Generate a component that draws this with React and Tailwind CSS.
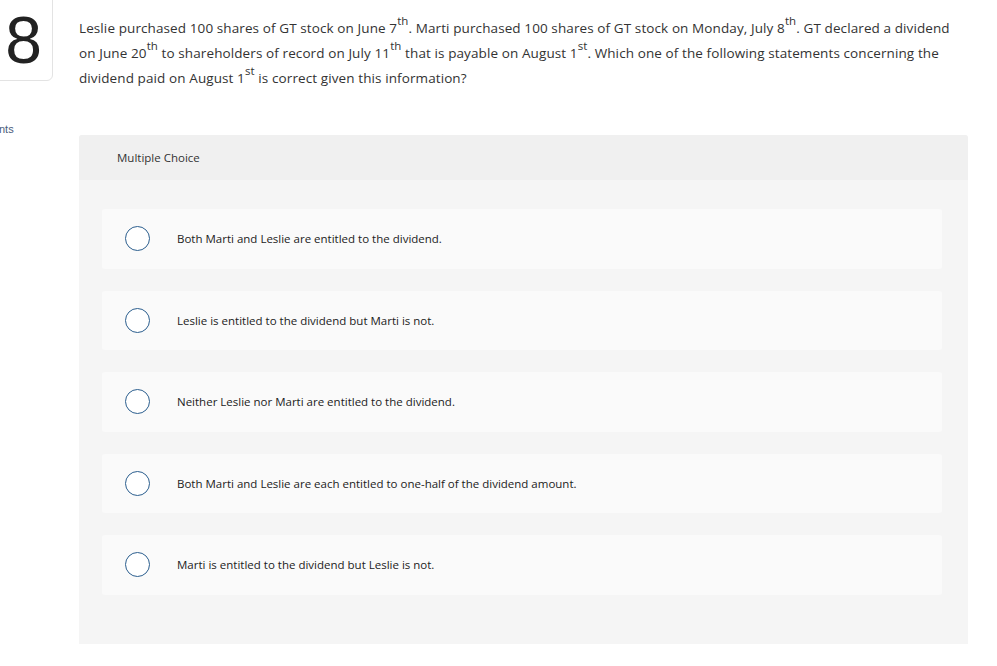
export default function App() {
  const options = [
    "Both Marti and Leslie are entitled to the dividend.",
    "Leslie is entitled to the dividend but Marti is not.",
    "Neither Leslie nor Marti are entitled to the dividend.",
    "Both Marti and Leslie are each entitled to one-half of the dividend amount.",
    "Marti is entitled to the dividend but Leslie is not.",
  ];
  const sup = "text-[11.5px] leading-none relative -top-[8px] align-baseline";
  return (
    <div className="w-[997px] h-[666px] bg-white overflow-hidden flex" style={{ fontFamily: '"Open Sans", "Liberation Sans", sans-serif' }}>
      <div className="w-[79px] shrink-0 flex flex-col">
        <div className="-ml-[20px] -mt-[10px] w-[73px] h-[91px] border border-[#e3e3e3] rounded-[6px] bg-white flex items-center justify-center pt-[8px] pl-[14px]">
          <span className="text-[66px] leading-none font-light text-[#222]" style={{ fontFamily: '"Liberation Sans", sans-serif' }}>8</span>
        </div>
        <div className="-ml-[1px] mt-[40px] text-[11px] text-[#4a5d7a]" style={{ fontFamily: '"Liberation Sans", sans-serif' }}>nts</div>
      </div>
      <div className="flex-1 pr-[29px] pt-[16px] flex flex-col">
        <p className="text-[13.5px] leading-[25px] text-[#333] tracking-[0.1px]">
          Leslie purchased 100 shares of GT stock on June 7<span className={sup}>th</span>. Marti purchased 100 shares of GT stock on Monday, July 8<span className={sup}>th</span>. GT declared a dividend on June 20<span className={sup}>th</span> to shareholders of record on July 11<span className={sup}>th</span> that is payable on August 1<span className={sup}>st</span>. Which one of the following statements concerning the dividend paid on August 1<span className={sup}>st</span> is correct given this information?
        </p>
        <div className="mt-[44px] bg-[#f5f5f5] rounded-t-[3px] pb-[49px] flex flex-col">
          <div className="h-[45px] bg-[#f0f0f0] flex items-center pl-[38px] text-[11.5px] text-[#333] rounded-t-[3px]">
            Multiple Choice
          </div>
          <div className="pt-[29px] pl-[23px] pr-[26px] flex flex-col gap-[22px]">
            {options.map((o) => (
              <div key={o} className="h-[59.5px] bg-[#fafafa] rounded-[3px] flex items-center pl-[23px]">
                <span className="w-[25px] h-[25px] rounded-full border-[1.5px] border-[#2b5e8e] bg-white shrink-0" />
                <span className="ml-[27px] text-[11.5px] text-[#222]">{o}</span>
              </div>
            ))}
          </div>
        </div>
      </div>
    </div>
  );
}
